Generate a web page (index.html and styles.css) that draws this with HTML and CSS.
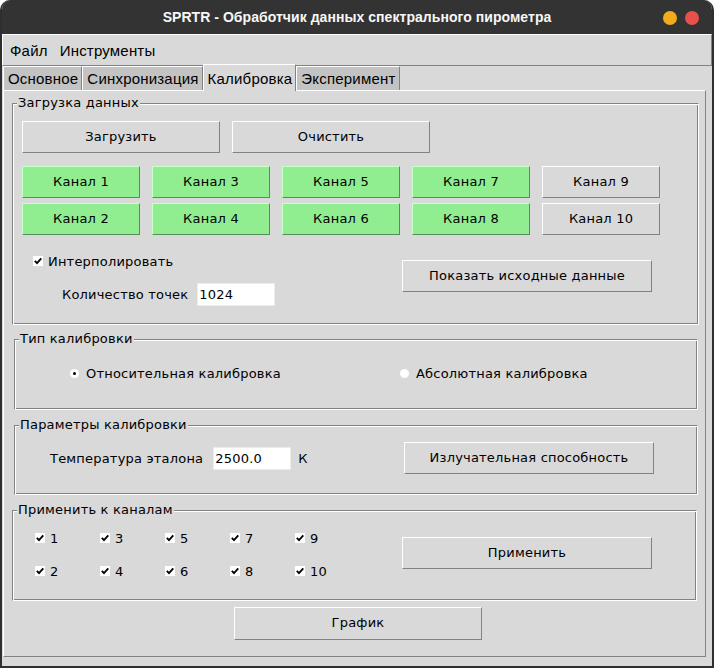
FILE: index.html
```html
<!DOCTYPE html>
<html lang="ru">
<head>
<meta charset="utf-8">
<title>SPRTR</title>
<link rel="stylesheet" href="styles.css">
</head>
<body>
<div class="window">
  <div class="titlebar">
    <span class="title">SPRTR - Обработчик данных спектрального пирометра</span>
    <span class="controls"><span class="dot dot-min"></span><span class="dot dot-close"></span></span>
  </div>
  <div class="menubar"><span>Файл</span><span>Инструменты</span></div>
  <div class="notebook">
    <div class="tabs">
      <div class="tab">Основное</div>
      <div class="tab">Синхронизация</div>
      <div class="tab active">Калибровка</div>
      <div class="tab">Эксперимент</div>
    </div>
    <div class="panel">
      <div class="group group-load">
        <div class="legend">Загрузка данных</div>
        <div class="btn-row">
          <button class="btn btn-wide">Загрузить</button>
          <button class="btn btn-wide">Очистить</button>
        </div>
        <div class="channels">
          <button class="btn ch on">Канал 1</button>
          <button class="btn ch on">Канал 3</button>
          <button class="btn ch on">Канал 5</button>
          <button class="btn ch on">Канал 7</button>
          <button class="btn ch">Канал 9</button>
          <button class="btn ch on">Канал 2</button>
          <button class="btn ch on">Канал 4</button>
          <button class="btn ch on">Канал 6</button>
          <button class="btn ch on">Канал 8</button>
          <button class="btn ch">Канал 10</button>
        </div>
        <div class="options">
          <div class="left-col">
            <div class="check check-interp"><span class="box"><svg width="10" height="10" viewBox="0 0 10 10"><path d="M1.8 4.8 L4 7.2 L8.3 2.3" fill="none" stroke="#000" stroke-width="1.8"/></svg></span><span>Интерполировать</span></div>
            <div class="count-row"><span>Количество точек</span><input class="entry" value="1024"></div>
          </div>
          <button class="btn btn-side btn-show">Показать исходные данные</button>
        </div>
      </div>

      <div class="group group-type">
        <div class="legend">Тип калибровки</div>
        <div class="radio-row">
          <div class="radio radio-first"><span class="circle selected"></span><span>Относительная калибровка</span></div>
          <div class="radio"><span class="circle"></span><span>Абсолютная калибровка</span></div>
        </div>
      </div>

      <div class="group group-params">
        <div class="legend">Параметры калибровки</div>
        <div class="param-row">
          <div class="left-col param-left">
            <span>Температура эталона</span>
            <input class="entry entry-temp" value="2500.0">
            <span class="unit">К</span>
          </div>
          <button class="btn btn-side">Излучательная способность</button>
        </div>
      </div>

      <div class="group group-apply">
        <div class="legend">Применить к каналам</div>
        <div class="apply-row">
          <div class="left-col ch-grid">
            <div class="check"><span class="box"><svg width="10" height="10" viewBox="0 0 10 10"><path d="M1.8 4.8 L4 7.2 L8.3 2.3" fill="none" stroke="#000" stroke-width="1.8"/></svg></span><span>1</span></div>
            <div class="check"><span class="box"><svg width="10" height="10" viewBox="0 0 10 10"><path d="M1.8 4.8 L4 7.2 L8.3 2.3" fill="none" stroke="#000" stroke-width="1.8"/></svg></span><span>3</span></div>
            <div class="check"><span class="box"><svg width="10" height="10" viewBox="0 0 10 10"><path d="M1.8 4.8 L4 7.2 L8.3 2.3" fill="none" stroke="#000" stroke-width="1.8"/></svg></span><span>5</span></div>
            <div class="check"><span class="box"><svg width="10" height="10" viewBox="0 0 10 10"><path d="M1.8 4.8 L4 7.2 L8.3 2.3" fill="none" stroke="#000" stroke-width="1.8"/></svg></span><span>7</span></div>
            <div class="check"><span class="box"><svg width="10" height="10" viewBox="0 0 10 10"><path d="M1.8 4.8 L4 7.2 L8.3 2.3" fill="none" stroke="#000" stroke-width="1.8"/></svg></span><span>9</span></div>
            <div class="check"><span class="box"><svg width="10" height="10" viewBox="0 0 10 10"><path d="M1.8 4.8 L4 7.2 L8.3 2.3" fill="none" stroke="#000" stroke-width="1.8"/></svg></span><span>2</span></div>
            <div class="check"><span class="box"><svg width="10" height="10" viewBox="0 0 10 10"><path d="M1.8 4.8 L4 7.2 L8.3 2.3" fill="none" stroke="#000" stroke-width="1.8"/></svg></span><span>4</span></div>
            <div class="check"><span class="box"><svg width="10" height="10" viewBox="0 0 10 10"><path d="M1.8 4.8 L4 7.2 L8.3 2.3" fill="none" stroke="#000" stroke-width="1.8"/></svg></span><span>6</span></div>
            <div class="check"><span class="box"><svg width="10" height="10" viewBox="0 0 10 10"><path d="M1.8 4.8 L4 7.2 L8.3 2.3" fill="none" stroke="#000" stroke-width="1.8"/></svg></span><span>8</span></div>
            <div class="check"><span class="box"><svg width="10" height="10" viewBox="0 0 10 10"><path d="M1.8 4.8 L4 7.2 L8.3 2.3" fill="none" stroke="#000" stroke-width="1.8"/></svg></span><span>10</span></div>
          </div>
          <button class="btn btn-side btn-apply">Применить</button>
        </div>
      </div>

      <div class="plot-row"><button class="btn btn-plot">График</button></div>
    </div>
  </div>
</div>
</body>
</html>
```

FILE: styles.css
```css
* { box-sizing: border-box; }
html, body { margin: 0; padding: 0; background: #ffffff; }

.window {
  width: 714px;
  height: 668px;
  display: flex;
  flex-direction: column;
  background: #d9d9d9;
  border: 2px solid #2f2f2f;
  border-top: 0;
  border-radius: 10px 10px 0 0;
  overflow: hidden;
  font-family: "DejaVu Sans", sans-serif;
  font-size: 13px;
  letter-spacing: 0.2px;
  color: #000;
}

.titlebar {
  flex: none;
  height: 34px;
  margin: 0 -2px;
  background: #333333;
  display: grid;
  grid-template-columns: 1fr auto 1fr;
  align-items: center;
}
.title {
  grid-column: 2;
  color: #f7f7f7;
  font: bold 14px "Liberation Sans", sans-serif;
  letter-spacing: 0.05px;
}
.controls {
  grid-column: 3;
  justify-self: end;
  display: flex;
  gap: 8px;
  margin: 2px 15px 0 0;
}
.dot { width: 14px; height: 14px; border-radius: 50%; }
.dot-min { background: #f2ab1c; }
.dot-close { background: #e9504b; }

.menubar {
  flex: none;
  height: 32px;
  display: flex;
  align-items: center;
  gap: 12px;
  padding-left: 7px;
  border: 1px solid;
  border-color: #ffffff #828282 #828282 #ffffff;
  font: 15px "Liberation Sans", sans-serif;
  letter-spacing: 0.2px;
}

.notebook {
  flex: 1;
  display: flex;
  flex-direction: column;
  margin: 0 6px 9px 1px;
}
.tabs {
  flex: none;
  height: 24px;
  display: flex;
  align-items: flex-end;
}
.tab {
  height: 24px;
  padding: 0 3px 0 4px;
  display: flex;
  align-items: center;
  background: #c3c3c3;
  border-top: 1px solid #ffffff;
  border-left: 1px solid #ffffff;
  border-right: 1px solid #828282;
  font: 15px "Liberation Sans", sans-serif;
  letter-spacing: 0.2px;
  white-space: nowrap;
}
.tab.active {
  height: 27px;
  margin-bottom: -1px;
  background: #d9d9d9;
  position: relative;
  z-index: 1;
}
.panel {
  flex: 1;
  border: 1px solid;
  border-color: #ffffff #828282 #828282 #ffffff;
}

.group {
  border: 1px solid;
  border-color: #828282 #ffffff #ffffff #828282;
  box-shadow: inset 1px 1px 0 #ffffff, inset -1px -1px 0 #828282;
  padding: 0 9px;
}
.legend {
  width: max-content;
  margin: -9px 0 0 -5px;
  padding: 0 1px;
  line-height: 16px;
  background: #d9d9d9;
}
.group-load { margin: 12px 6px 0 8px; padding-bottom: 18px; }
.group-type { margin: 14px 7px 0 10px; padding-bottom: 27px; }
.group-params { margin: 15px 7px 0 10px; padding-bottom: 20px; }
.group-apply { margin: 15px 8px 0 8px; padding-bottom: 20px; }

.btn {
  display: flex;
  align-items: center;
  justify-content: center;
  margin: 0;
  padding: 0 0 2px 0;
  height: 32px;
  font: 13px "DejaVu Sans", sans-serif;
  letter-spacing: 0.2px;
  color: #000;
  background: #d9d9d9;
  border: 1px solid;
  border-color: #ffffff #828282 #828282 #ffffff;
  border-radius: 0;
}
.btn.on {
  background: #90ee90;
  border-color: #c9ffc9 #568f56 #568f56 #c9ffc9;
}

.btn-row { display: flex; gap: 12px; margin-top: 10px; }
.btn-wide { width: 198px; }

.channels {
  display: grid;
  grid-template-columns: repeat(5, 118px);
  column-gap: 12px;
  row-gap: 5px;
  margin-top: 13px;
}

.options { display: flex; margin-top: 17px; }
.left-col { width: 380px; flex: none; }
.btn-side { width: 250px; }
.btn-show { margin-top: 8px; }

.check {
  display: flex;
  align-items: center;
  gap: 5px;
  height: 18px;
}
.check-interp { margin-left: 11px; }
.box {
  width: 10px;
  height: 10px;
  background: #ffffff;
  display: block;
}
.box svg { display: block; }

.count-row {
  display: flex;
  align-items: center;
  gap: 9px;
  height: 23px;
  margin: 13px 0 0 40px;
}
.entry {
  width: 78px;
  height: 23px;
  margin: 0;
  padding: 0 0 0 1px;
  background: #ffffff;
  border: 1px solid #ececec;
  border-radius: 0;
  font: 13px "DejaVu Sans", sans-serif;
  letter-spacing: 0.2px;
  color: #000;
  outline: none;
}

.radio-row { display: flex; margin: 17px 0 0 46px; height: 18px; }
.radio { display: flex; align-items: center; gap: 7px; }
.radio-first { width: 330px; }
.circle {
  width: 9px;
  height: 9px;
  border-radius: 50%;
  background: #ffffff;
  display: flex;
  align-items: center;
  justify-content: center;
}
.circle.selected::after {
  content: "";
  width: 3px;
  height: 3px;
  border-radius: 50%;
  background: #000;
}

.param-row { display: flex; align-items: center; margin-top: 9px; }
.param-left { display: flex; align-items: center; padding-left: 26px; }
.entry-temp { margin-left: 10px; }
.unit { margin-left: 7px; }

.apply-row { display: flex; align-items: flex-start; margin-top: 11px; }
.ch-grid {
  display: grid;
  grid-template-columns: repeat(5, 65px);
  row-gap: 15px;
  padding-left: 13px;
}
.btn-apply { margin-top: 8px; }

.plot-row { margin: 6px 0 0 230px; }
.btn-plot { width: 248px; height: 33px; }
```
